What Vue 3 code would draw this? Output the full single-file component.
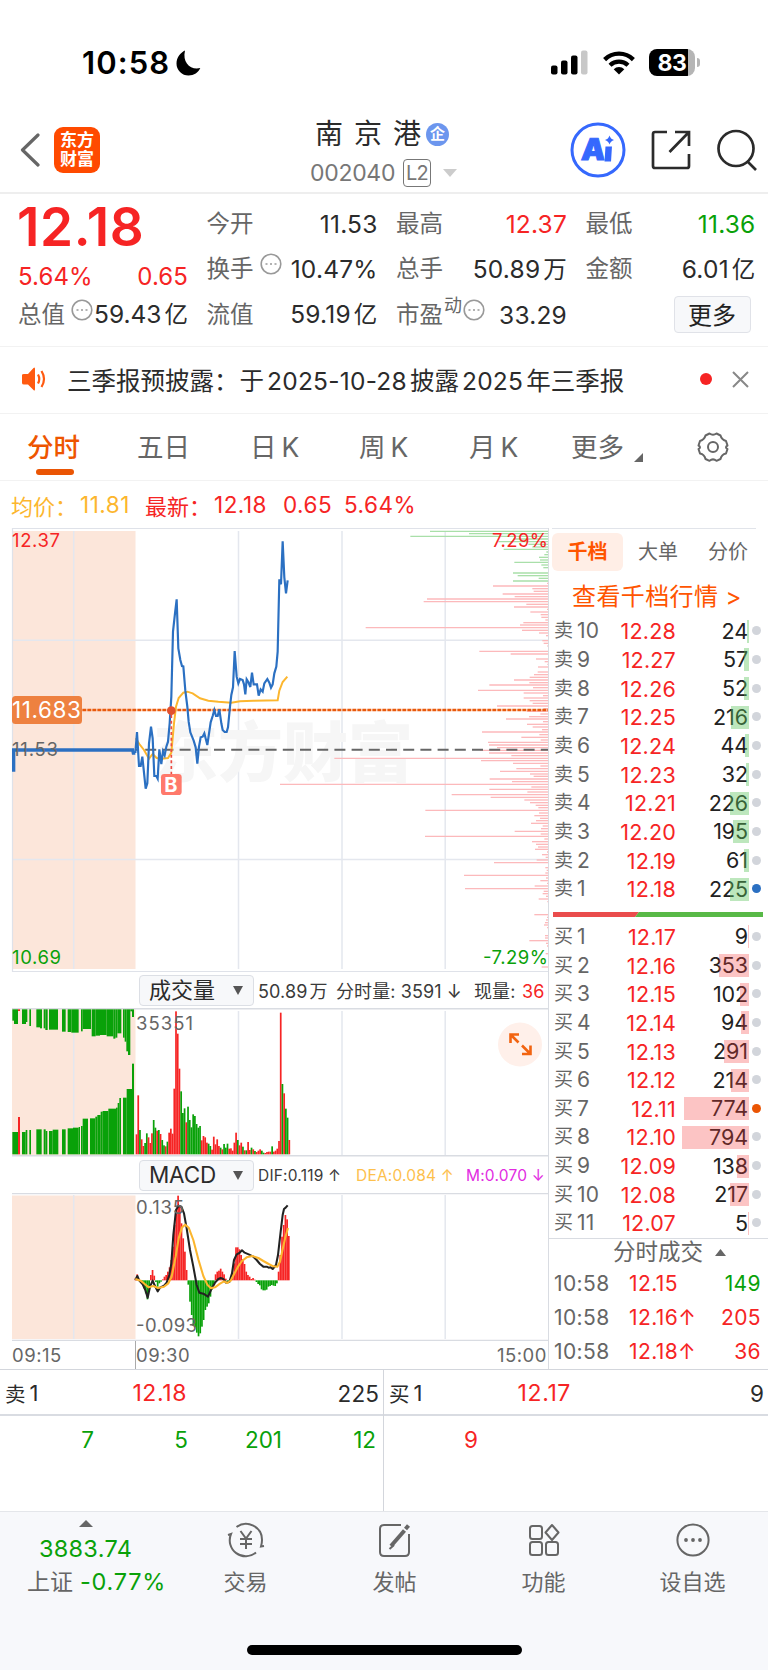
<script setup>
const sells = [
  ['10', '12.28', 24, 2], ['9', '12.27', 57, 5], ['8', '12.26', 52, 5], ['7', '12.25', 216, 18],
  ['6', '12.24', 44, 4], ['5', '12.23', 32, 3], ['4', '12.21', 226, 19], ['3', '12.20', 195, 16],
  ['2', '12.19', 61, 5], ['1', '12.18', 225, 19, 'blue'],
]
const buys = [
  ['1', '12.17', 9, 1], ['2', '12.16', 353, 30], ['3', '12.15', 102, 9], ['4', '12.14', 94, 8],
  ['5', '12.13', 291, 25], ['6', '12.12', 214, 18], ['7', '12.11', 774, 65, 'orange'],
  ['8', '12.10', 794, 67], ['9', '12.09', 138, 12], ['10', '12.08', 217, 19], ['11', '12.07', 5, 1],
]
const trades = [
  ['10:58', '12.15', '149', 'green'],
  ['10:58', '12.16↑', '205', 'red'],
  ['10:58', '12.18↑', '36', 'red'],
]

// order-depth bars: [y, left edge]; the right edge is shared
const depthGreen = [
  [34, 450], [41, 567], [49, 391], [57, 700], [65, 655], [73, 745], [81, 757], [88, 671], [96, 799], [104, 793],
  [112, 777], [120, 780], [127, 703], [135, 784], [143, 790], [159, 699], [167, 713], [175, 776], [183, 699],
]
const depthRed = [
  [190, 801], [198, 639], [206, 757], [214, 761], [222, 668], [230, 704], [237, 441], [245, 431], [253, 739], [261, 702],
  [268, 801], [276, 751], [284, 782], [292, 784], [300, 796], [308, 730], [315, 720], [323, 257], [331, 726], [339, 777],
  [347, 798], [362, 787], [370, 791], [378, 802], [394, 598], [402, 692], [417, 768], [425, 794], [433, 802], [441, 774],
  [456, 773], [464, 762], [472, 749], [480, 702], [488, 748], [495, 628], [503, 759], [511, 594], [519, 731], [527, 789],
  [534, 731], [542, 749], [550, 758], [558, 651], [566, 790], [574, 740], [582, 781], [590, 747], [597, 678], [605, 789],
  [613, 741], [621, 758], [629, 786], [636, 606], [644, 778], [652, 724], [660, 782], [667, 624], [675, 627], [683, 651],
  [691, 600], [699, 627], [707, 694], [715, 163], [722, 603], [730, 699], [738, 781], [746, 709], [754, 660], [762, 750],
  [769, 761], [777, 629], [785, 696], [793, 0], [801, 754], [808, 628], [816, 742], [824, 515], [832, 632], [840, 733],
  [848, 750], [856, 767], [863, 775], [871, 436], [879, 777], [887, 763], [895, 780], [902, 768], [910, 753], [918, 788],
  [926, 783], [934, 704], [942, 782], [949, 435], [957, 793], [965, 756], [973, 768], [981, 774], [988, 765], [996, 801],
  [1004, 786], [1012, 797], [1020, 770], [1028, 642], [1043, 796], [1051, 800], [1059, 796], [1066, 552], [1074, 798],
  [1082, 781], [1090, 801], [1098, 764], [1106, 555], [1114, 791], [1121, 788], [1129, 798], [1137, 776], [1145, 802],
  [1184, 763], [1192, 801], [1200, 798], [1208, 795], [1215, 792], [1223, 801], [1247, 795], [1254, 795], [1262, 748],
  [1270, 798], [1278, 801], [1301, 797], [1341, 785],
]

const STEP = 5.15
const auctionTop = [
  [37, 42, 182], [42, 54, 192], [66, 78, 192], [78, 82, 186], [88, 93, 198], [109, 120, 202], [120, 126, 205], [131, 136, 205],
  [136, 143, 210], [147, 174, 209], [186, 197, 215], [203, 214, 216], [214, 236, 218], [243, 248, 214], [248, 273, 207],
  [275, 287, 229], [287, 300, 227], [300, 320, 225], [320, 340, 229], [340, 346, 236], [346, 352, 233], [352, 364, 220],
  [369, 374, 233], [374, 379, 245], [379, 384, 274], [384, 391, 285], [391, 396, 154], [396, 402, 171],
]
const auctionBottom = [
  [37, 54, 516], [66, 77, 516], [77, 82, 510], [88, 93, 510], [109, 125, 508], [131, 137, 508], [137, 142, 513], [147, 158, 513],
  [158, 175, 509], [186, 197, 508], [203, 219, 505], [219, 236, 503], [236, 240, 501], [243, 248, 498], [248, 264, 476],
  [270, 286, 475], [286, 292, 470], [292, 302, 465], [302, 308, 455], [308, 325, 453], [325, 348, 446], [348, 353, 443],
  [353, 358, 429], [358, 363, 414], [369, 380, 413], [380, 396, 387], [396, 402, 311],
]
const volume = (
  'r523 r406 g510 r538 r558 g549 g520 r532 r549 r520 g480 g503 r512 g510 r522 g540 g556 r559 g545 r518 r506 r521 r386 r154 r221 ' +
  'r326 g394 g459 g445 r487 g440 g480 g502 g463 g468 g492 g503 g498 r541 r528 r532 r548 g551 g558 r569 r530 r553 r538 r558 g563 ' +
  'r568 g552 g563 g551 r566 r565 r572 r548 r518 g540 r556 r548 g560 r571 g571 r546 r570 g563 r568 g573 r576 r572 r568 g572 g578 ' +
  'r579 r576 r575 r575 g559 r575 r572 r566 r543 r158 g372 r400 g446 g473 r540'
).split(' ').map((t, i) => ({ x: 407 + i * STEP, y: +t.slice(1), c: t[0] }))
const macd = [
  355, 343, 362, 365, 372, 385, 400, 418, 395, 345, 330, 347, 366, 380, 370, 365, 358, 350, 345, 335, 322, 300, 260, 195, 150,
  107, 140, 190, 235, 275, 330, 374, 425, 465, 495, 502, 518, 529, 520, 500, 480, 450, 440, 430, 410, 388, 372, 343, 335, 332,
  326, 335, 343, 356, 365, 368, 355, 340, 310, 262, 262, 268, 285, 298, 312, 335, 345, 350, 357, 354, 359, 366, 372, 376, 388,
  391, 391, 389, 380, 378, 375, 377, 378, 370, 335, 285, 230, 195, 165, 178, 228,
].map((y, i) => ({ x: 404 + i * 5.11, y }))

const periods = [
  ['五日', 'p2'], ['日K', 'p3'], ['周K', 'p4'], ['月K', 'p5'],
]
</script>

<template>
  <div class="screen">
    <header class="status">
      <span class="clock">10:58</span>
      <svg class="moon" width="25" height="26" viewBox="0 0 25 26"><path d="M9 .5C5 2.500 .5 7 .5 13.500A12 12 0 0 0 12.500 25.500C18 25.500 22.500 22.500 24.300 18C15 20.500 6 13 9 .5Z" /></svg>
      <span class="grow"></span>
      <svg width="37" height="25" viewBox="0 0 37 25">
        <rect x="0" y="15.500" width="6.500" height="9" rx="2" /><rect x="10" y="10.500" width="6.500" height="14" rx="2" />
        <rect x="20" y="5.500" width="6.500" height="19" rx="2" /><rect x="30" y="0.500" width="6.500" height="24" rx="2" fill="#c8c8c8" />
      </svg>
      <svg class="wifi" width="32" height="24" viewBox="0 0 32 24" fill="none" stroke="#000" stroke-width="4.300">
        <path d="M1.600 8.600A20.500 20.500 0 0 1 30.400 8.600" /><path d="M7 14.300A13 13 0 0 1 25 14.300" />
        <path d="M16 23.500L10.700 18.200A7.500 7.500 0 0 1 21.300 18.200Z" fill="#000" stroke="none" />
      </svg>
      <span class="battery"><b>83</b></span><i class="nub"></i>
    </header>

    <nav class="titlebar">
      <svg class="back" width="20" height="34" viewBox="0 0 20 34"><path d="M18 2L2.500 17L18 32" fill="none" stroke="#666" stroke-width="3.200" stroke-linecap="round" stroke-linejoin="round" /></svg>
      <div class="brand"><span>东方</span><span>财富</span></div>
      <div class="stock">
        <div class="name"><span>南京港</span><b>企</b></div>
        <div class="code"><span>002040</span><i>L2</i><svg width="14" height="8"><path d="M0 0H14L7 8Z" fill="#ccc" /></svg></div>
      </div>
      <svg class="ai" width="56" height="56" viewBox="0 0 56 56">
        <circle cx="28" cy="28" r="26" fill="none" stroke="#3568fd" stroke-width="3" />
        <text x="11" y="38.500" font-size="30" font-weight="900" fill="#3568fd" stroke="#3568fd" transform="skewX(-4) translate(2.500 0)" textLength="21">A</text>
        <path d="M35.500 24.500H42L41 39.500H34.500Z" fill="#3568fd" />
        <path d="M39.500 13.500Q40.500 17 44 18Q40.500 19 39.500 22.500Q38.500 19 35 18Q38.500 17 39.500 13.500Z" fill="#3568fd" />
      </svg>
      <svg class="share" width="40" height="40" viewBox="0 0 40 40" fill="none" stroke="#2b2b2b" stroke-width="2.700">
        <path d="M16 2H4Q2 2 2 4V36Q2 38 4 38H36Q38 38 38 36V24M24 2H38V16M38 2L18.500 22" />
      </svg>
      <svg width="42" height="42" viewBox="0 0 42 42" fill="none" stroke="#2b2b2b" stroke-width="2.700"><circle cx="20" cy="19.500" r="17.500" /><path d="M31 32L40 41" /></svg>
    </nav>

    <section class="quotes">
      <div class="pricecol">
        <div class="price">12.18</div>
        <div class="change"><span>5.64%</span><span>0.65</span></div>
      </div>
      <div class="cell c2"><label>今开</label><b>11.53</b></div>
      <div class="cell"><label>最高</label><b class="red">12.37</b></div>
      <div class="cell"><label>最低</label><b class="green">11.36</b></div>
      <div class="cell c2"><label>换手</label><svg class="tip" viewBox="0 0 22 22"><circle cx="11" cy="11" r="9.800" /><path d="M5.500 11h2M10 11h2M14.500 11h2" /></svg><b>10.47%</b></div>
      <div class="cell"><label>总手</label><b>50.89<em>万</em></b></div>
      <div class="cell"><label>金额</label><b>6.01<em>亿</em></b></div>
      <div class="cell c1"><label>总值</label><svg class="tip" viewBox="0 0 22 22"><circle cx="11" cy="11" r="9.800" /><path d="M5.500 11h2M10 11h2M14.500 11h2" /></svg><b>59.43<em>亿</em></b></div>
      <div class="cell"><label>流值</label><b>59.19<em>亿</em></b></div>
      <div class="cell"><label>市盈</label><sup>动</sup><svg class="tip pe" viewBox="0 0 22 22"><circle cx="11" cy="11" r="9.800" /><path d="M5.500 11h2M10 11h2M14.500 11h2" /></svg><b>33.29</b></div>
      <div class="cell"><button>更多</button></div>
    </section>

    <section class="news">
      <svg width="26" height="28" viewBox="0 0 26 28"><path d="M1 10Q1 9 3 9H7L12.500 3Q14 1.500 14 4V24Q14 26.500 12.500 25L7 19.500H3Q1 19.500 1 18Z" fill="#ff5a10" /><path d="M17 9.500Q19.500 14 17 18.500M20.500 6Q25.500 14 20.500 22" fill="none" stroke="#ff5a10" stroke-width="2.200" /></svg>
      <p>三季报预披露：<span class="yu">于</span><i>2025-10-28</i>披露<i>2025</i>年三季报</p>
      <span class="dot"></span>
      <svg width="17" height="17" viewBox="0 0 17 17"><path d="M1 1L16 16M16 1L1 16" stroke="#888" stroke-width="2" /></svg>
    </section>

    <nav class="periods">
      <span class="on">分时</span>
      <span v-for="p in periods" :key="p[0]" :class="p[1]">{{ p[0].slice(0, 1) }}<i v-if="p[0][1] === 'K'">K</i><template v-else>日</template></span>
      <span class="p6">更多</span>
      <svg class="corner" width="9" height="9"><path d="M9 0V9H0Z" fill="#666" /></svg>
      <svg class="gear" width="32" height="32" viewBox="0 0 32 32" fill="none" stroke="#666" stroke-width="2">
        <path d="M12.500 2.500Q16 5 19.500 2.500L23.500 4.500Q24.500 8.500 29 10L30.500 14.500Q27.500 16 30.500 18L29 22.500Q24.500 23.500 23.500 28L19.500 29.800Q16 27 12.500 29.800L8.500 28Q7.500 23.500 3 22.500L1.500 18Q4.500 16 1.500 14.500L3 10Q7.500 8.500 8.500 4.500Z" stroke-linejoin="round" />
        <circle cx="16" cy="16" r="5" />
      </svg>
    </nav>

    <div class="legend"><span class="avg">均价：</span><i class="avg l1">11.81</i><span class="red">最新：</span><i class="red l2">12.18</i><i class="red l3">0.65</i><i class="red">5.64%</i></div>

    <main>
      <div class="charts">
        <svg class="blk" width="548" height="444" viewBox="0 528 548 444">
          <rect x="12" y="531" width="123.500" height="438" fill="#fce6da" />
          <g stroke="#e4e7ee" stroke-width="1.500">
            <path d="M73.700 531V969M238.500 531V969M342 531V969M445.200 531V969" /><path d="M12 640.300H548M12 859.500H548" />
            <path d="M12 528.500H548M12 971.500H548M12.500 528V972" stroke="#dfe2e9" stroke-width="1.200" />
          </g>
          <text x="153" y="776" font-size="65" font-weight="900" fill="#f6f6f6" textLength="260">东方财富</text>
          <g transform="translate(280 520) scale(.33333)">
            <path v-for="d in depthGreen" :key="'g' + d[0]" :d="`M${d[1]} ${d[0]}H805`" stroke="#a9dfa9" stroke-width="4" />
            <path v-for="d in depthRed" :key="'r' + d[0]" :d="`M${d[1]} ${d[0]}H805`" stroke="#fcb9bb" stroke-width="4" />
          </g>
          <path d="M135 749.800H548" stroke="#666" stroke-width="2" stroke-dasharray="11 6.200" stroke-dashoffset="7" />
          <g transform="translate(0 520) scale(.33333)" fill="none">
            <path d="M37 570H1644" stroke="#e95a0c" stroke-width="7" stroke-dasharray="12 3" />
            <path d="M407 655L418 672 432 690 447 716 458 702 470 714 485 716 504 714 514 698 522 610 528 560 536 534 550 518 562 515 578 520 600 535 625 542 655 545 694 548 720 544 760 542 833 541 838 512 848 486 862 470" stroke="#fcb62e" stroke-width="6" />
            <path d="M41 755V690H398L400 699H406" stroke="#2b70c2" stroke-width="10" />
            <path d="M406 699L411 636 417 738H422L427 710 437 806 442 790 447 670 453 620 458 655 463 768H469L473 776 478 688 484 732 489 694 494 706 499 680 504 665 509 610 514 530 519 335 525 280 530 238 535 385 541 420 546 438 550 439 556 512 562 560 566 605 571 637 581 662 587 682 592 731 597 680 602 652 608 650 613 640 622 675 632 607 638 588 643 570 648 588H653L658 568 664 610 668 630 674 636H680L684 622 690 560 694 525 699 502 704 393 710 470 715 490 720 477 728 480 732 493 736 523 740 478 745 486 751 501 756 458 761 493H771L776 527 782 508 788 515 793 490 802 477 808 488 813 503 818 493 823 460 829 440 833 395 838 178 843 193 848 64 853 172 858 220 863 181" stroke="#2b70c2" stroke-width="6.500" stroke-linejoin="miter" />
            <path d="M514 585V765" stroke="#ed4b42" stroke-width="5" stroke-dasharray="9 8" />
            <circle cx="514" cy="572" r="13" fill="#e2502f" />
            <rect x="483" y="762" width="62" height="63" rx="10" fill="#ff796b" />
          </g>
          <text x="164.300" y="792" font-size="20" font-weight="700" fill="#fff" textLength="13.500">B</text>
          <rect x="12" y="696" width="70" height="28" rx="3.500" fill="#ee8140" />
          <text x="12" y="718" font-size="22.500" fill="#fff" textLength="69">11.683</text>
          <text x="12" y="756" font-size="18.500" fill="#666" textLength="46">11.53</text>
          <text x="12" y="547" font-size="18.500" class="tr" textLength="48">12.37</text>
          <text x="12" y="964" font-size="18.500" class="tg" textLength="49">10.69</text>
          <text x="492" y="547" font-size="18.500" class="tr" textLength="56">7.29%</text>
          <text x="483" y="964" font-size="18.500" class="tg" textLength="65">-7.29%</text>
        </svg>

        <div class="tool"><button>成交量<svg width="10" height="9"><path d="M0 0H10L5 9Z" fill="#555" /></svg></button>
          <p class="vol"><span>50.89<em>万</em></span><span class="v2">分时量: 3591 ↓</span><span class="v3">现量:</span><span class="red v4">36</span></p></div>

        <svg class="blk" width="548" height="149" viewBox="0 1008 548 149">
          <rect x="12" y="1009" width="123.500" height="146" fill="#fce6da" />
          <path d="M73.700 1011V1155M238.500 1011V1155M342 1011V1155M445.200 1011V1155" stroke="#e4e7ee" stroke-width="1.500" />
          <path d="M12 1008.700H548M12 1155.800H548" stroke="#d9dce2" stroke-width="1.500" />
          <g transform="translate(0 960) scale(.33333)" fill="#09a109">
            <rect v-for="b in auctionTop" :key="'t' + b[0]" :x="b[0]" y="148" :width="b[1] - b[0]" :height="b[2] - 148" />
            <rect v-for="b in auctionBottom" :key="'b' + b[0]" :x="b[0]" :y="b[2]" :width="b[1] - b[0]" :height="583 - b[2]" />
            <rect x="54" y="471" width="6" height="112" fill="#f62424" />
            <rect x="54" y="148" width="6" height="5" fill="#f62424" />
            <rect v-for="b in volume" :key="b.x" :x="b.x" :y="b.y" width="5.150" :height="583 - b.y" :fill="b.c === 'r' ? '#f62424' : '#09a109'" />
          </g>
          <text x="136" y="1030" font-size="18.500" fill="#666" textLength="57">35351</text>
          <circle cx="520" cy="1044.500" r="22" fill="#fff0ea" />
          <path d="M519 1034.500H510.500V1043M511 1035L518.500 1042.500M522 1054H530.500V1045.500M530 1053.500L522 1045.500" fill="none" stroke="#f26411" stroke-width="2.600" />
        </svg>

        <div class="tool"><button class="macd">MACD<svg width="10" height="9"><path d="M0 0H10L5 9Z" fill="#555" /></svg></button>
          <p class="dif"><span>DIF:0.119 ↑</span><span class="dea">DEA:0.084 ↑</span><span class="m">M:0.070 ↓</span></p></div>

        <svg class="blk" width="548" height="148" viewBox="0 1193 548 148">
          <rect x="12" y="1195.500" width="123.500" height="143.500" fill="#fce6da" />
          <path d="M73.700 1195V1339M238.500 1195V1339M342 1195V1339M445.200 1195V1339" stroke="#e4e7ee" stroke-width="1.500" />
          <path d="M12 1193.500H548M12 1340.300H548" stroke="#d9dce2" stroke-width="1.300" />
          <g transform="translate(0 1160) scale(.33333)">
            <rect v-for="b in macd" :key="b.x" :x="b.x" :y="Math.min(b.y, 361)" width="5.110" :height="Math.abs(b.y - 361)" :fill="b.y < 361 ? '#f62424' : '#09a109'" />
            <path d="M406 360L412 348 418 362 428 373 436 390 443 413 450 380 458 362 464 376 473 394 480 383 492 377 500 368 508 345 514 310 520 225 528 150 536 137 544 140 552 160 560 205 570 270 580 320 590 375 598 398 610 401 624 410 634 388 645 368 655 357 662 354 670 357 678 368 688 366 696 340 702 300 710 283 718 279 726 271 734 278 746 283 760 290 770 300 780 312 790 320 800 320 806 323 812 322 818 327 828 315 834 285 842 215 848 165 852 147 857 143 863 136" fill="none" stroke="#222" stroke-width="6.200" stroke-linejoin="round" />
            <path d="M406 357L422 362 434 372 446 382 460 378 474 384 492 380 505 370 515 350 527 290 536 235 546 202 556 194 566 203 580 240 595 298 610 348 622 374 633 385 645 382 660 371 672 364 682 369 692 362 702 343 714 320 726 303 740 292 757 288 775 294 790 303 806 312 820 319 832 320 840 305 848 268 856 232 864 204" fill="none" stroke="#fcb62e" stroke-width="6.200" stroke-linejoin="round" />
          </g>
          <text x="136" y="1214" font-size="18.500" fill="#666" textLength="48">0.135</text>
          <text x="136" y="1332" font-size="18.500" fill="#666" textLength="61">-0.093</text>
        </svg>
        <div class="axis"><span>09:15</span><span class="open">09:30</span><span class="close">15:00</span></div>
      </div>

      <aside>
        <div class="tabs"><span class="on">千档</span><span>大单</span><span class="t3">分价</span></div>
        <div class="link">查看千档行情 <i>&gt;</i></div>
        <div class="book">
          <div v-for="r in sells" :key="r[0]" class="row"><span class="lv">卖<i>{{ r[0] }}</i></span><span class="px">{{ r[1] }}</span><span class="qty">{{ r[2] }}<u class="bg-g" :style="{ width: r[3] + 'px' }"></u></span><s :class="r[4]"></s></div>
        </div>
        <svg class="ratio" width="210" height="5"><path d="M0 0H86L82 5H0Z" fill="#ea4c4c" /><path d="M86 0H210V5H82Z" fill="#58b947" /></svg>
        <div class="book">
          <div v-for="r in buys" :key="r[0]" class="row"><span class="lv">买<i>{{ r[0] }}</i></span><span class="px">{{ r[1] }}</span><span class="qty">{{ r[2] }}<u class="bg-r" :style="{ width: r[3] + 'px' }"></u></span><s :class="r[4]"></s></div>
        </div>
        <div class="deals"><span>分时成交</span><svg width="11" height="7"><path d="M5.500 0L11 7H0Z" fill="#666" /></svg></div>
        <div v-for="t in trades" :key="t[1]" class="trade"><span>{{ t[0] }}</span><span class="red tp">{{ t[1] }}</span><span :class="[t[3], 'tv']">{{ t[2] }}</span></div>
      </aside>
    </main>

    <section class="best">
      <div class="side">
        <div class="head"><span>卖<i>1</i></span><b class="red">12.18</b><b>225</b></div>
        <div class="queue green"><span>7</span><span>5</span><span>201</span><span>12</span></div>
      </div>
      <div class="side buy">
        <div class="head"><span>买<i>1</i></span><b class="red">12.17</b><b>9</b></div>
        <div class="queue red"><span>9</span></div>
      </div>
    </section>

    <footer>
      <div class="bar">
        <div class="index">
          <svg width="14" height="7"><path d="M7 0L14 7H0Z" fill="#666" /></svg>
          <b>3883.74</b>
          <p>上证<i>-0.77%</i></p>
        </div>
        <div class="item">
          <svg width="40" height="36" viewBox="0 0 40 36" fill="none" stroke="#666" stroke-width="2">
            <path d="M10.500 5A16 16 0 0 1 36 18Q36 21 35 24.500L38 24M30 30.500A16 16 0 0 1 5 12L2 13" />
            <path d="M14.500 9L20 16.500L25.500 9M20 16.500V27M14 17H26M14 22H26" />
          </svg>
          <span>交易</span>
        </div>
        <div class="item">
          <svg width="36" height="36" viewBox="0 0 36 36" fill="none" stroke="#666" stroke-width="2">
            <path d="M24 3H7Q3 3 3 7V30Q3 34 7 34H28Q32 34 32 30V12" /><path d="M14 24L27.500 8.500" stroke-width="4" /><path d="M12.500 27L17 23" /><path d="M28.500 7L31.500 3.500" stroke-width="4" />
          </svg>
          <span>发帖</span>
        </div>
        <div class="item">
          <svg width="32" height="36" viewBox="0 0 32 36" fill="none" stroke="#666" stroke-width="2">
            <rect x="2" y="4" width="12" height="13" rx="2.500" /><rect x="2" y="20" width="12" height="13" rx="2.500" /><rect x="18" y="20" width="12" height="13" rx="2.500" />
            <path d="M24 3L30.500 10.500L24 18L17.500 10.500Z" stroke-linejoin="round" />
          </svg>
          <span>功能</span>
        </div>
        <div class="item">
          <svg width="36" height="36" viewBox="0 0 36 36"><circle cx="18" cy="18" r="15.600" fill="none" stroke="#666" stroke-width="2" /><g fill="#666"><circle cx="11" cy="18" r="1.900" /><circle cx="18" cy="18" r="1.900" /><circle cx="25" cy="18" r="1.900" /></g></svg>
          <span>设自选</span>
        </div>
      </div>
      <div class="home"></div>
    </footer>
  </div>
</template>

<style>
body { background: #fff; }
</style>
<style scoped>
.screen { width: 768px; height: 1670px; overflow: hidden; background: #fff; font-family: Inter, "Noto Sans CJK SC", sans-serif; color: #2b2b2b; }
.screen * { box-sizing: border-box; }
i, em, s, u { font-style: normal; text-decoration: none; }
b { font-weight: 400; }
p { margin: 0; }
svg { flex: none; }
svg text { font-family: Inter, "Noto Sans CJK SC", sans-serif; }
.red { color: #f62424; }
.green { color: #09a109; }
.tr { fill: #f62424; }
.tg { fill: #09a109; }
.grow { flex: 1; }
.blk { display: block; }
span { white-space: nowrap; }

.status { height: 108px; padding: 17px 68px 0 82px; display: flex; align-items: center; }
.clock { font-size: 31px; font-weight: 600; color: #000; letter-spacing: 1.100px; width: 94px; }
.wifi { margin: 0 14px 0 15px; }
.battery { width: 46px; height: 27px; border-radius: 8px; background: linear-gradient(90deg, #000 39.500px, #b5b5b5 39.500px); display: flex; align-items: center; justify-content: center; }
.battery b { color: #fff; font-size: 23px; font-weight: 700; letter-spacing: -.4px; }
.nub { width: 3px; height: 9px; margin-left: 2px; border-radius: 0 4px 4px 0; background: #b5b5b5; }

.titlebar { height: 86px; border-bottom: 2px solid #eee; padding: 0 10px 0 20px; display: flex; align-items: center; }
.brand { flex: none; width: 46px; height: 46px; margin: -1px 0 0 14px; border-radius: 9px; background: #ff4a00; color: #fff; display: flex; flex-direction: column; align-items: center; justify-content: center; }
.brand span { font-size: 17px; line-height: 19px; font-weight: 700; }
.stock { flex: 1; display: flex; flex-direction: column; padding: 4px 0 0 210px; }
.name { display: flex; align-items: center; height: 42px; padding-left: 5px; }
.name span { font-size: 28px; letter-spacing: 11px; width: 111px; line-height: 40px; flex: none; }
.name b { width: 23px; height: 23px; border-radius: 50%; background: #6c96ee; color: #fff; font-size: 15px; line-height: 21px; text-align: center; font-weight: 700; }
.code { display: flex; align-items: center; color: #777; height: 36px; }
.code span { font-size: 23px; width: 93px; letter-spacing: -.3px; }
.code i { width: 28px; height: 28px; border: 1.500px solid #777; border-radius: 4px; font-size: 20px; line-height: 26px; text-align: center; letter-spacing: -.8px; margin-right: 12px; }
.share { margin: 0 25px; }

.quotes { height: 153px; padding: 7px 13px 0 18px; border-bottom: 1.500px solid #f2f2f2; display: grid; grid-template-columns: 170px 171px 171px 170px; column-gap: 18.500px; grid-template-rows: repeat(3, 45.500px); font-size: 23.500px; }
.pricecol { grid-row: 1 / 3; color: #f62424; }
.price { font-size: 53px; line-height: 52px; height: 58px; font-weight: 600; letter-spacing: .7px; margin-left: -1px; }
.change { display: flex; justify-content: space-between; line-height: 36px; font-size: 24px; letter-spacing: .1px; }
.cell { display: flex; align-items: center; line-height: 34px; white-space: nowrap; }
.cell label { color: #666; }
.cell b { margin-left: auto; font-size: 24.500px; letter-spacing: .2px; }
em { margin-left: 3px; font-size: 23.500px; }
.tip { width: 22px; height: 22px; margin: -10px 0 0 6px; fill: none; stroke: #999; stroke-width: 1.600; }
.tip.pe { margin-left: 1px; }
.c1 .tip { margin-left: 6px; }
.c1 b { letter-spacing: 0; }
sup { font-size: 18px; line-height: 20px; margin: -17px 0 0 1px; color: #666; }
.cell button { margin: 0 5px 0 auto; width: 77px; height: 37px; border: 1.500px solid #e0e2e8; border-radius: 4px; background: #f7f8fa; font: 24px/30px "Noto Sans CJK SC", sans-serif; padding: 0 0 2px; color: #222; }

.news { height: 67px; border-bottom: 1.500px solid #f2f2f2; padding: 0 19px 2px 21px; display: flex; align-items: center; }
.news p { margin-left: 20px; width: 634px; font-size: 24.500px; white-space: nowrap; }
.news i { letter-spacing: .25px; margin: 0 3px; }
.yu { margin-left: 1px; }
.dot { width: 12px; height: 12px; border-radius: 50%; background: #f62424; margin-right: 20px; }

.periods { height: 67px; border-bottom: 1.500px solid #f2f2f2; display: flex; align-items: center; padding-left: 27px; font-size: 26.500px; color: #666; }
.periods span { line-height: 64px; height: 64px; }
.periods i { margin-left: 5px; }
.periods .on { color: #ee5500; font-weight: 500; position: relative; width: 110px; }
.periods .on::after { content: ""; position: absolute; left: 9px; top: 54px; width: 38px; height: 6px; border-radius: 3px; background: #ea5504; }
.p2 { width: 113px; } .p3 { width: 109px; } .p4 { width: 110px; } .p5 { width: 102px; } .p6 { width: 63px; }
.corner { margin-top: 20px; }
.gear { margin-left: 54px; }

.legend { height: 47px; display: flex; align-items: center; padding-left: 11px; font-size: 22.500px; }
.legend span { width: 69px; font-size: 22px; }
.legend i { letter-spacing: .5px; }
.legend .l1 { width: 65px; }
.avg { color: #fcb62e; }
.legend .l2 { width: 69px; }
.legend .l3 { width: 61px; }

main { display: flex; height: 841px; }
.charts { width: 549px; border-right: 1px solid #d9dce2; }
.tool { height: 36px; display: flex; align-items: center; padding-left: 139px; }
.tool button { width: 115px; height: 31px; border: 1.300px solid #dcdfe5; border-radius: 4px; background: #f7f8fa; padding: 0 10px 0 9px; display: flex; align-items: center; justify-content: space-between; font-family: inherit; font-size: 22px; line-height: 28px; color: #2b2b2b; flex: none; }
.tool .macd { font-size: 22.500px; letter-spacing: -.2px; }
.tool p { display: flex; align-items: baseline; white-space: nowrap; }
.tool em { font-size: 18px; margin-left: 2px; }
.vol { font-size: 18px; margin-left: 4px; letter-spacing: .1px; color: #3a3a3a; }
.vol span { width: 78px; }
.vol .v2 { width: 138px; } .vol .v3 { width: 48px; } .vol .v4 { width: auto; }
.dif { font-size: 15.500px; margin-left: 4px; letter-spacing: .2px; color: #3a3a3a; }
.dif span { width: 98px; }
.dif .dea { color: #fdc04c; width: 110px; }
.dif .m { color: #e22be2; width: auto; }
.axis { height: 28px; padding-left: 12px; display: flex; font-size: 18.500px; line-height: 28px; color: #666; letter-spacing: .5px; }
.axis span { width: 123px; }
.axis .open { border-left: 1px solid #aaa; width: 362px; }
.axis .close { width: auto; }

aside { flex: 1; }
.tabs { margin: 0 12px 0 3px; border-top: 1.200px solid #e1e4ea; padding-top: 4px; height: 43px; display: flex; font-size: 20px; line-height: 38px; color: #666; }
.tabs span { width: 86px; }
.tabs .on { width: 71px; height: 38px; border-radius: 6px; background: #ffeee6; color: #ff5500; font-weight: 700; text-align: center; margin-right: 15px; }
.tabs .t3 { width: 40px; margin-left: -16px; }
.link { height: 46px; line-height: 51px; padding-left: 23px; font-size: 24px; color: #ff5500; letter-spacing: .4px; }
.row { height: 28.660px; display: flex; align-items: center; padding-left: 5px; font-size: 21.500px; line-height: 28px; }
.lv { font-size: 19px; color: #666; width: 53px; display: flex; }
.lv i { font-size: 21px; margin-left: 4px; letter-spacing: .3px; }
.px { width: 69px; text-align: right; color: #f62424; letter-spacing: .2px; }
.qty { width: 73px; text-align: right; position: relative; height: 23px; line-height: 23px; padding-right: 1px; color: #222; letter-spacing: -.1px; }
.qty u { position: absolute; right: 0; top: 0; height: 23px; }
.bg-g { background: rgba(90, 195, 90, .4); }
.bg-r { background: rgba(245, 60, 60, .3); }
.row s { width: 9px; height: 9px; border-radius: 50%; background: #d2d5db; margin-left: 3px; margin-top: -1px; }
.row s.blue { background: #2b70c2; }
.row s.orange { background: #ea5504; }
.ratio { display: block; margin: 8px 0 6px 4px; }
.deals { height: 30px; border-top: 1.500px solid #d9dce2; display: flex; align-items: center; padding: 0 0 2px 64px; font-size: 22.500px; color: #666; line-height: 28px; }
.deals svg { margin-left: 12px; }
.trade { height: 34px; display: flex; align-items: center; padding: 0 7px 2px 5px; font-size: 21px; color: #666; letter-spacing: .4px; }
.trade span:first-child { width: 75px; }
.tv { margin-left: auto; }

.best { height: 143px; display: flex; border-top: 1.500px solid #d3d6dc; border-bottom: 1.500px solid #e4e6ea; }
.side { width: 384px; border-right: 1.500px solid #d3d6dc; }
.buy { border-right: 0; }
.head { height: 46px; border-bottom: 2px solid #d9dce2; display: grid; grid-template-columns: 84px 98px 1fr; align-items: center; font-size: 22.500px; padding: 2px 4px 0 5px; letter-spacing: .1px; }
.head span { font-size: 20.500px; display: flex; align-items: center; }
.head i { font-size: 22px; margin-left: 4px; }
.head b { text-align: right; }
.head .red { font-size: 23px; letter-spacing: .6px; }
.queue { display: grid; grid-template-columns: repeat(4, 94px); padding: 6px 0 0 0; font-size: 22.500px; line-height: 35px; text-align: right; letter-spacing: 0; }

footer { height: 158px; background: #f7f8fb; }
.bar { display: flex; height: 133px; padding-left: 13px; }
.index { width: 145px; margin-right: 13px; text-align: center; display: flex; flex-direction: column; align-items: center; padding-top: 8px; }
.index b { font-size: 23.500px; line-height: 34px; margin-top: 5px; color: #09a109; letter-spacing: .3px; }
.index p { font-size: 23px; line-height: 32px; display: flex; color: #666; margin-left: 22px; white-space: nowrap; }
.index i { color: #09a109; margin-left: 7px; font-size: 23.500px; letter-spacing: .7px; }
.item { width: 149px; display: flex; flex-direction: column; align-items: center; padding-top: 10px; color: #666; }
.item span { font-size: 22px; line-height: 30px; margin-top: 9px; }
.home { width: 275px; height: 10px; border-radius: 5px; background: #000; margin: 0 auto; }
</style>
